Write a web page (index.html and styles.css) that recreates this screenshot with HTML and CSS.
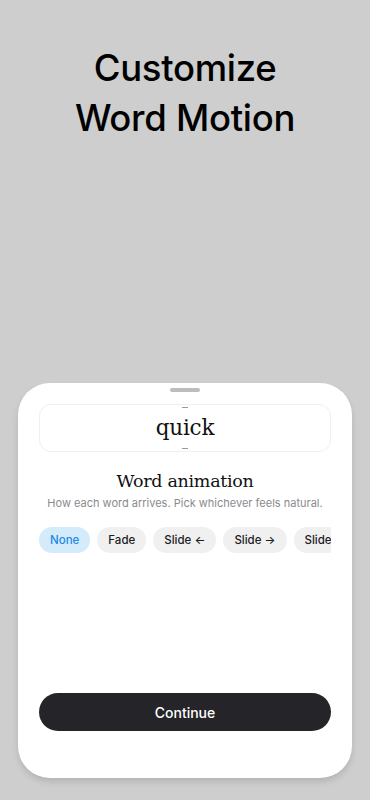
FILE: index.html
```html
<!DOCTYPE html>
<html lang="en">
<head>
    <meta charset="UTF-8">
    <meta name="viewport" content="width=device-width, initial-scale=1.0">
    <title>Customize Word Motion</title>
    <link rel="stylesheet" href="styles.css">
</head>
<body>
    <div class="screen">
        <h1 class="title">Customize<br>Word Motion</h1>

        <!-- bottom sheet -->
        <div class="sheet">
            <div class="handle"></div>
            <div class="preview">
                <span class="tick"></span>
                <span class="word">quick</span>
                <span class="tick"></span>
            </div>

            <h2 class="sheet-title">Word animation</h2>
            <p class="sheet-sub">How each word arrives. Pick whichever feels natural.</p>

            <div class="chips">
                <button class="chip active">None</button>
                <button class="chip">Fade</button>
                <button class="chip">Slide ←</button>
                <button class="chip">Slide →</button>
                <button class="chip">Slide ↑</button>
            </div>

            <button class="continue-btn">Continue</button>
        </div>
    </div>
</body>
</html>
```

FILE: styles.css
```css
* {
    margin: 0;
    padding: 0;
    box-sizing: border-box;
}

body {
    font-family: 'Inter', 'Liberation Sans', sans-serif;
    background-color: #cdcecd;
}

.screen {
    height: 800px;
    display: flex;
    flex-direction: column;
    align-items: center;
}

.title {
    margin-top: 43px;
    font-size: 36.5px;
    font-weight: 500;
    line-height: 50px;
    letter-spacing: -0.3px;
    text-align: center;
    color: #000;
}

.sheet {
    margin-top: auto;
    margin-bottom: 22px;
    width: 334px;
    height: 395px;
    background-color: #fff;
    border-radius: 32px;
    box-shadow: 0 4px 6px rgba(0, 0, 0, 0.12);
    padding: 0 21px 47px;
    display: flex;
    flex-direction: column;
}

.handle {
    width: 30px;
    height: 4px;
    border-radius: 2px;
    background-color: #bdbdbf;
    margin: 5px auto 0;
}

.preview {
    margin-top: 12px;
    height: 48px;
    border: 1px solid #eef0ee;
    border-radius: 12px;
    display: flex;
    flex-direction: column;
    align-items: center;
    justify-content: space-between;
    padding: 2px 0;
}

.tick {
    width: 6px;
    height: 1px;
    background-color: #9a9a9a;
}

.word {
    font-family: 'DejaVu Serif', Georgia, serif;
    font-size: 21.5px;
    line-height: 28px;
    color: #111;
    letter-spacing: -0.2px;
}

.sheet-title {
    margin-top: 17px;
    font-family: 'DejaVu Serif', Georgia, serif;
    font-size: 17.5px;
    font-weight: normal;
    line-height: 24px;
    text-align: center;
    color: #111;
    letter-spacing: -0.3px;
}

.sheet-sub {
    margin-top: 2px;
    font-size: 11px;
    line-height: 16px;
    color: #8a8a8e;
    text-align: center;
}

.chips {
    margin-top: 16px;
    display: flex;
    gap: 7px;
    overflow: hidden;
}

.chip {
    flex: none;
    height: 26px;
    padding: 0 11px;
    border: none;
    border-radius: 13px;
    background-color: #f0f0f1;
    font-family: 'Inter', 'Liberation Sans', sans-serif;
    font-size: 11.5px;
    font-weight: 500;
    color: #1c1c1e;
}

.chip.active {
    background-color: #d4ebfc;
    color: #1a8ae6;
}

.continue-btn {
    margin-top: auto;
    height: 38px;
    border: none;
    border-radius: 19px;
    background-color: #252429;
    color: #fff;
    font-family: 'Inter', 'Liberation Sans', sans-serif;
    font-size: 14px;
    font-weight: 500;
}
```
